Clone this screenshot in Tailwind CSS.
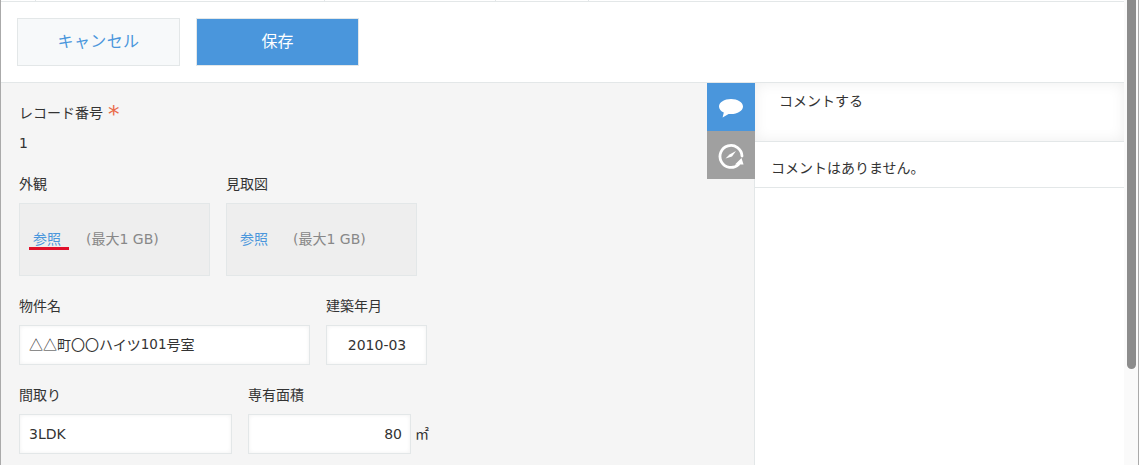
<!DOCTYPE html>
<html lang="ja">
<head>
  <meta charset="UTF-8">
  <meta name="viewport" content="width=device-width, initial-scale=1.0">
  <title>レコード編集</title>
  <script src="https://cdn.jsdelivr.net/npm/@tailwindcss/browser@4"></script>
</head>
<body class="bg-white text-[14px] text-[#333] font-['DejaVu_Sans','Noto_Sans_CJK_JP',sans-serif]">
  <div class="flex h-[465px] w-[1139px] overflow-hidden border-l border-r border-[#aaa]">
    <div class="flex-1 min-w-0 flex flex-col">
      <!-- Top strip -->
      <div class="h-[2px] shrink-0 border-b border-[#e3e7e8] flex">
        <div class="w-[35px] border-r border-[#e3e7e8]"></div>
        <div class="w-[289px] border-r border-[#e3e7e8]"></div>
        <div class="w-[171px] border-r border-[#e3e7e8]"></div>
        <div class="w-[93px] border-r border-[#e3e7e8]"></div>
      </div>

      <!-- Toolbar -->
      <div class="h-[81px] shrink-0 border-b border-[#e3e7e8] flex gap-4 pl-4 pt-4">
        <button class="w-[163px] h-[48px] bg-[#f7f9fa] border border-[#e3e7e8] text-[#4a96dc] text-[16px] tracking-[0.4px]">キャンセル</button>
        <button class="w-[163px] h-[48px] bg-[#4a96dc] border border-[#e3e7e8] text-white text-[16px]">保存</button>
      </div>

      <div class="flex flex-1 min-h-0">
        <!-- Form -->
        <main class="w-[706px] shrink-0 bg-[#f5f5f5] pl-[18px] pt-[20px] font-['Noto_Sans_CJK_JP','DejaVu_Sans',sans-serif]">
          <div class="flex h-[20px] leading-[18px]">
            <span>レコード番号</span>
            <span class="ml-[5px] text-[#ea6a4a] text-[23px] leading-[22px] font-['DejaVu_Sans',sans-serif]">*</span>
          </div>
          <div class="mt-[11px] h-[20px] leading-[18px] font-['DejaVu_Sans',sans-serif]">1</div>

          <div class="flex gap-4 mt-[20px]">
            <div>
              <div class="h-[20px] leading-[18px]">外観</div>
              <div class="relative mt-[9px] w-[191px] h-[73px] bg-[#eeeeee] border border-[#e3e7e8] flex items-center pl-[13px] pb-[1px]">
                <span class="text-[#4a96dc] mb-[2px]">参照</span>
                <span class="ml-[25px] text-[#888] font-['DejaVu_Sans','Noto_Sans_CJK_JP',sans-serif]">(最大1 GB)</span>
                <div class="absolute left-[9px] top-[43px] w-[40px] h-[3px] bg-[#e0102a]"></div>
              </div>
            </div>
            <div>
              <div class="h-[20px] leading-[18px]">見取図</div>
              <div class="mt-[9px] w-[191px] h-[73px] bg-[#eeeeee] border border-[#e3e7e8] flex items-center pl-[13px] pb-[1px]">
                <span class="text-[#4a96dc] mb-[2px]">参照</span>
                <span class="ml-[25px] text-[#888] font-['DejaVu_Sans','Noto_Sans_CJK_JP',sans-serif]">(最大1 GB)</span>
              </div>
            </div>
          </div>

          <div class="flex gap-4 mt-[20px]">
            <div>
              <div class="h-[20px] leading-[18px]">物件名</div>
              <div class="mt-[9px] w-[291px] h-[40px] bg-white border border-[#e3e7e8] shadow-[inset_0_0_4px_rgba(0,0,0,0.06)] flex items-center pl-[9px] pb-[2px]">△△町〇〇ハイツ<span class="font-['DejaVu_Sans',sans-serif] text-[13.5px]">101</span>号室</div>
            </div>
            <div>
              <div class="h-[20px] leading-[18px]">建築年月</div>
              <div class="mt-[9px] w-[101px] h-[40px] bg-white border border-[#e3e7e8] shadow-[inset_0_0_4px_rgba(0,0,0,0.06)] flex items-center justify-center pl-[1px] font-['DejaVu_Sans',sans-serif]">2010-03</div>
            </div>
          </div>

          <div class="flex gap-4 mt-[20px]">
            <div>
              <div class="h-[20px] leading-[18px]">間取り</div>
              <div class="mt-[9px] w-[213px] h-[40px] bg-white border border-[#e3e7e8] shadow-[inset_0_0_4px_rgba(0,0,0,0.06)] flex items-center pl-[9px] font-['DejaVu_Sans',sans-serif]">3LDK</div>
            </div>
            <div>
              <div class="h-[20px] leading-[18px]">専有面積</div>
              <div class="mt-[9px] flex items-center">
                <div class="w-[163px] h-[40px] bg-white border border-[#e3e7e8] shadow-[inset_0_0_4px_rgba(0,0,0,0.06)] flex items-center justify-end pr-[8px] font-['DejaVu_Sans',sans-serif]">80</div>
                <span class="ml-[4px] mb-[2px]">㎡</span>
              </div>
            </div>
          </div>
        </main>

        <!-- Side tabs -->
        <div class="w-[48px] shrink-0 bg-[#f5f5f5]">
          <div class="relative z-10 w-[48px] h-[48px] bg-[#4a96dc] flex items-center justify-center">
            <svg width="26" height="22" viewBox="0 -1 26 22" fill="#fff">
              <path d="M13 2C6.4 2 1 5.2 1 9.5c0 2.6 1.9 4.8 4.8 6.1L4.6 20.5l6-3.6c.8.1 1.6.2 2.4.2 6.6 0 12-3.4 12-7.6S19.6 2 13 2z"/>
            </svg>
          </div>
          <div class="relative z-10 w-[48px] h-[48px] bg-[#a0a0a0] flex items-center justify-center">
            <svg width="28" height="28" viewBox="0 -1 28 28" fill="none" stroke="#fff">
              <path d="M21.5 22.5A11 11 0 1 1 25 14" stroke-width="2.8" stroke-linecap="round"/>
              <path d="M18 22.5h8.5l-2-6.5z" fill="#fff" stroke="none"/>
              <path d="M8.5 16.5L12.5 12.5 19 9 15 14.5z" fill="#fff" stroke="none"/>
            </svg>
          </div>
        </div>

        <!-- Comments -->
        <aside class="flex-1 min-w-0 border-l border-[#e3e7e8] -ml-[1px] relative flex flex-col font-['Noto_Sans_CJK_JP',sans-serif]">
          <div class="h-[59px] shrink-0 border-b border-[#e3e7e8] shadow-[inset_0_0_14px_rgba(0,0,0,0.07)] pl-[24px] pt-[7px] leading-[20px]">コメントする</div>
          <div class="h-[46px] shrink-0 border-b border-[#e3e7e8] pl-[16px] pt-[6px] flex items-center">コメントはありません。</div>
        </aside>
      </div>
    </div>

    <!-- Scrollbar -->
    <div class="w-[14px] shrink-0 bg-[#fafafa] pl-[3px]">
      <div class="w-[9px] h-[369px] bg-[#8c8c8c] rounded-b-[5px]"></div>
    </div>
  </div>
</body>
</html>
